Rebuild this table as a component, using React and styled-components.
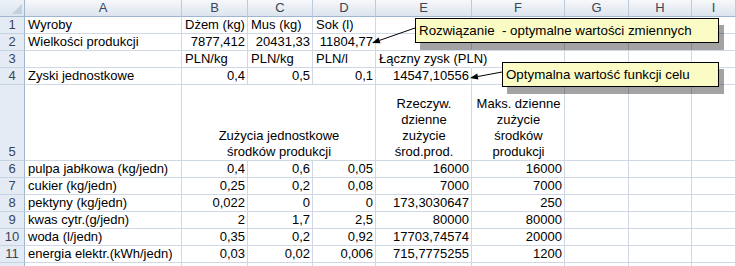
import React from "react";
import styled, { createGlobalStyle } from "styled-components";

const GlobalStyle = createGlobalStyle`
  html, body {
    margin: 0;
    padding: 0;
    background: #fff;
    overflow: hidden;
  }
`;

const COLS = ["A", "B", "C", "D", "E", "F", "G", "H", "I"];

const Sheet = styled.div`
  position: relative;
  width: 736px;
  height: 266px;
  overflow: hidden;
  font-family: "Liberation Sans", Arial, sans-serif;
  font-size: 13px;
  color: #000;
  background: #fff;
`;

const Grid = styled.div`
  display: grid;
  grid-template-columns: 25px 157px 66px 65px 63px 96px 93px 64px 63px 44px;
  grid-template-rows: repeat(5, 17px) 76px repeat(7, 17px);
`;

const Corner = styled.div`
  position: relative;
  box-sizing: border-box;
  background: linear-gradient(#eef2f8, #dce4ef);
  border-right: 1px solid #9eb6ce;
  border-bottom: 1px solid #9eb6ce;
  &::after {
    content: "";
    position: absolute;
    right: 2px;
    bottom: 2px;
    border-style: solid;
    border-width: 0 0 10px 10px;
    border-color: transparent transparent #c3cfdf transparent;
  }
`;

const ColHead = styled.div`
  box-sizing: border-box;
  min-width: 0;
  background: linear-gradient(#f6f8fb, #dde4ee);
  border-right: 1px solid #bccadb;
  border-bottom: 1px solid #9eb6ce;
  color: #3a4556;
  display: flex;
  align-items: center;
  justify-content: center;
  line-height: 16px;
`;

const RowHead = styled.div`
  box-sizing: border-box;
  background: #e4ebf5;
  border-right: 1px solid #9eb6ce;
  border-bottom: 1px solid #c6d3e3;
  color: #3a4556;
  display: flex;
  align-items: flex-end;
  justify-content: center;
  line-height: 16px;
`;

const Cell = styled.div`
  box-sizing: border-box;
  min-width: 0;
  grid-column: span ${(p) => p.$span || 1};
  border-right: 1px solid ${(p) => (p.$spill ? "transparent" : "#d0d7e5")};
  border-bottom: 1px solid #d0d7e5;
  display: flex;
  align-items: flex-end;
  justify-content: ${(p) =>
    p.$align === "right" ? "flex-end" : p.$align === "center" ? "center" : "flex-start"};
  text-align: ${(p) => p.$align || "left"};
  padding: 0 2px 0 3px;
  line-height: 16px;
  white-space: nowrap;
`;

const Callout = styled.div`
  position: absolute;
  box-sizing: border-box;
  left: ${(p) => p.$x}px;
  top: ${(p) => p.$y}px;
  width: ${(p) => p.$w}px;
  height: 25px;
  background: #fbfbc6;
  border: 1px solid #000;
  box-shadow: 5px 7px 0 rgba(0, 0, 0, 0.36);
  padding: 0 3px;
  font-size: 13.33px;
  display: flex;
  align-items: center;
  white-space: pre;
`;

const Overlay = styled.svg`
  position: absolute;
  left: 0;
  top: 0;
  pointer-events: none;
`;

// arrow from (x1,y1) to tip (x2,y2), filled head at the tip
const Arrow = ({ x1, y1, x2, y2 }) => {
  const dx = x2 - x1;
  const dy = y2 - y1;
  const len = Math.hypot(dx, dy);
  const ux = dx / len;
  const uy = dy / len;
  const bx = x2 - ux * 8;
  const by = y2 - uy * 8;
  const px = -uy * 3;
  const py = ux * 3;
  const pts = `${x2},${y2} ${bx + px},${by + py} ${bx - px},${by - py}`;
  return (
    <g>
      <line x1={x1} y1={y1} x2={bx} y2={by} stroke="#000" strokeWidth="1" />
      <polygon points={pts} fill="#000" />
    </g>
  );
};

const dataRows = [
  [6, "pulpa jabłkowa (kg/jedn)", "0,4", "0,6", "0,05", "16000", "16000"],
  [7, "cukier (kg/jedn)", "0,25", "0,2", "0,08", "7000", "7000"],
  [8, "pektyny (kg/jedn)", "0,022", "0", "0", "173,3030647", "250"],
  [9, "kwas cytr.(g/jedn)", "2", "1,7", "2,5", "80000", "80000"],
  [10, "woda (l/jedn)", "0,35", "0,2", "0,92", "17703,74574", "20000"],
  [11, "energia elektr.(kWh/jedn)", "0,03", "0,02", "0,006", "715,7775255", "1200"],
];

const Empty = ({ n }) =>
  Array.from({ length: n }).map((_, i) => <Cell key={"e" + i} />);

const App = () => {
  return (
    <Sheet>
      <GlobalStyle />
      <Grid>
        <Corner />
        {COLS.map((c) => (
          <ColHead key={c}>{c}</ColHead>
        ))}

        <RowHead>1</RowHead>
        <Cell>Wyroby</Cell>
        <Cell>Dżem (kg)</Cell>
        <Cell>Mus (kg)</Cell>
        <Cell>Sok (l)</Cell>
        <Empty n={5} />

        <RowHead>2</RowHead>
        <Cell>Wielkości produkcji</Cell>
        <Cell $align="right">7877,412</Cell>
        <Cell $align="right">20431,33</Cell>
        <Cell $align="right">11804,77</Cell>
        <Empty n={5} />

        <RowHead>3</RowHead>
        <Cell />
        <Cell>PLN/kg</Cell>
        <Cell>PLN/kg</Cell>
        <Cell>PLN/l</Cell>
        <Cell $spill>Łączny zysk (PLN)</Cell>
        <Empty n={4} />

        <RowHead>4</RowHead>
        <Cell>Zyski jednostkowe</Cell>
        <Cell $align="right">0,4</Cell>
        <Cell $align="right">0,5</Cell>
        <Cell $align="right">0,1</Cell>
        <Cell $align="right">14547,10556</Cell>
        <Empty n={4} />

        <RowHead>5</RowHead>
        <Cell />
        <Cell $span={3} $align="center">
          <span>
            Zużycia jednostkowe
            <br />
            środków produkcji
          </span>
        </Cell>
        <Cell $align="center">
          <span>
            Rzeczyw.
            <br />
            dzienne
            <br />
            zużycie
            <br />
            środ.prod.
          </span>
        </Cell>
        <Cell $align="center">
          <span>
            Maks. dzienne
            <br />
            zużycie
            <br />
            środków
            <br />
            produkcji
          </span>
        </Cell>
        <Empty n={3} />

        {dataRows.map(([n, label, ...vals]) => (
          <React.Fragment key={n}>
            <RowHead>{n}</RowHead>
            <Cell>{label}</Cell>
            {vals.map((v, i) => (
              <Cell key={i} $align="right">
                {v}
              </Cell>
            ))}
            <Empty n={3} />
          </React.Fragment>
        ))}

        {/* row 12 only peeks in at the bottom edge */}
        <RowHead />
        <Empty n={9} />
      </Grid>

      <Overlay width="736" height="266">
        <Arrow x1={415} y1={28} x2={372} y2={43} />
        <Arrow x1={502} y1={72} x2={470} y2={78} />
      </Overlay>

      <Callout $x={415} $y={18} $w={304}>
        Rozwiązanie  - optymalne wartości zmiennych
      </Callout>
      <Callout $x={502} $y={62} $w={217}>
        Optymalna wartość funkcji celu
      </Callout>
    </Sheet>
  );
};

export default App;
